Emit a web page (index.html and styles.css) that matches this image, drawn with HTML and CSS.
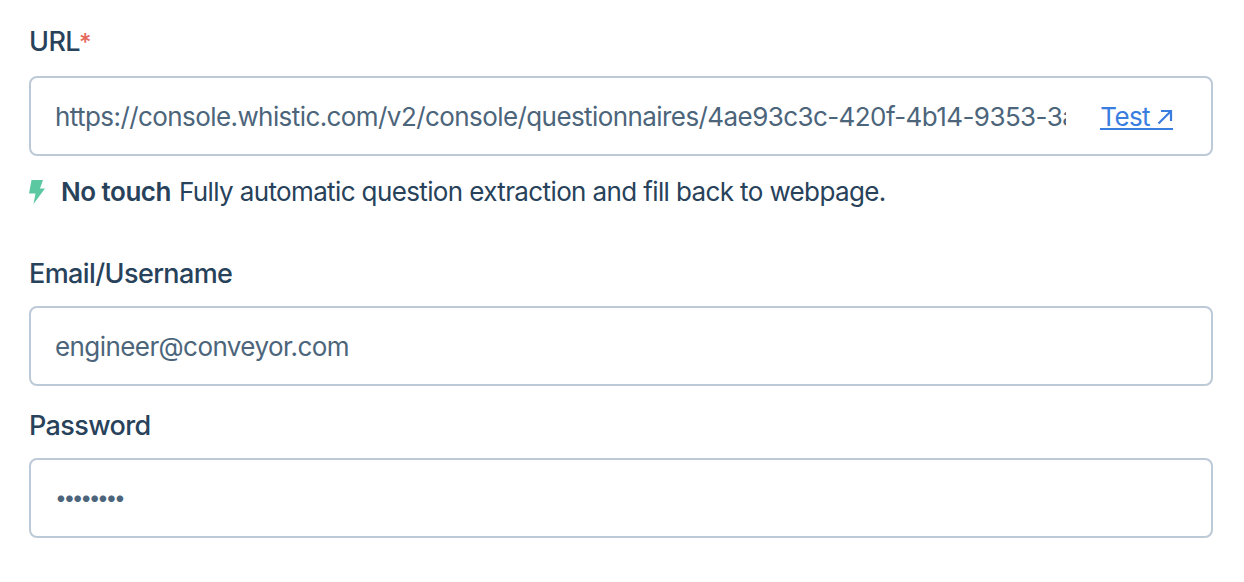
FILE: index.html
```html
<!DOCTYPE html>
<html lang="en">
<head>
<meta charset="utf-8">
<title>Connection form</title>
<link rel="stylesheet" href="styles.css">
</head>
<body>
<form class="form">
  <div class="field">
    <label class="label first-label">URL<span class="req">*</span></label>
    <div class="box">
      <input class="input" type="text" value="https://console.whistic.com/v2/console/questionnaires/4ae93c3c-420f-4b14-9353-3a8f1c2d7e60">
      <a class="test" href="#"><span>Test</span><svg class="arrow" viewBox="0 0 16 16" width="16" height="16"><path d="M1.500 14.500 14 2M4 2h10v10" fill="none" stroke="currentColor" stroke-width="2.200"/></svg></a>
    </div>
    <p class="hint"><svg class="bolt" viewBox="0 0 16 24" width="16" height="24"><path d="M2.500 0h11.500l-3 8.500h5L4.500 24l2-10.500H0z" fill="#5cc8a1"/></svg><strong>No touch</strong><span>Fully automatic question extraction and fill back to webpage.</span></p>
  </div>
  <div class="field second">
    <label class="label">Email/Username</label>
    <div class="box"><input class="input" type="text" value="engineer@conveyor.com"></div>
  </div>
  <div class="field third">
    <label class="label">Password</label>
    <div class="box"><input class="input secret" type="password" value="password"></div>
  </div>
</form>
</body>
</html>
```
FILE: styles.css
```css
* { box-sizing: border-box; }
html, body { margin: 0; background: #fff; }
body { font-family: Inter, "Liberation Sans", sans-serif; color: #27425a; overflow: hidden; }
.form { padding: 24px 31px 0 29px; }
.label { display: block; font-size: 27px; line-height: 36px; font-weight: 500; letter-spacing: -0.6px; margin-bottom: 14px; }
.first-label { margin-bottom: 16px; }
.req { color: #e5685c; font-size: 24px; line-height: 0; margin-left: -1px; }
.box { display: flex; align-items: center; height: 80px; border: 2px solid #bcc9d6; border-radius: 8px; padding: 0 38px 0 24px; background: #fff; }
.input { flex: 1; min-width: 0; border: 0; outline: 0; padding: 2px 0 0; background: transparent; font: 400 26px/36px Inter, "Liberation Sans", sans-serif; letter-spacing: -0.58px; color: #4c657b; }
.secret { font-size: 21px; letter-spacing: -3.4px; padding: 0; }
.test { display: flex; align-items: center; gap: 7px; margin: 4px 0 0 34px; font-size: 26px; line-height: 22px; letter-spacing: -0.6px; color: #3a7de0; text-decoration: none; border-bottom: 2px solid #3a7de0; }
.arrow { display: block; }
.hint { display: flex; align-items: center; margin: 18px 0 0; font-size: 26px; line-height: 36px; letter-spacing: -0.62px; }
.bolt { margin-right: 16px; }
.hint strong { font-weight: 600; margin-right: 8px; letter-spacing: -0.5px; }
.second { margin-top: 46px; }
.third { margin-top: 22px; }
```
